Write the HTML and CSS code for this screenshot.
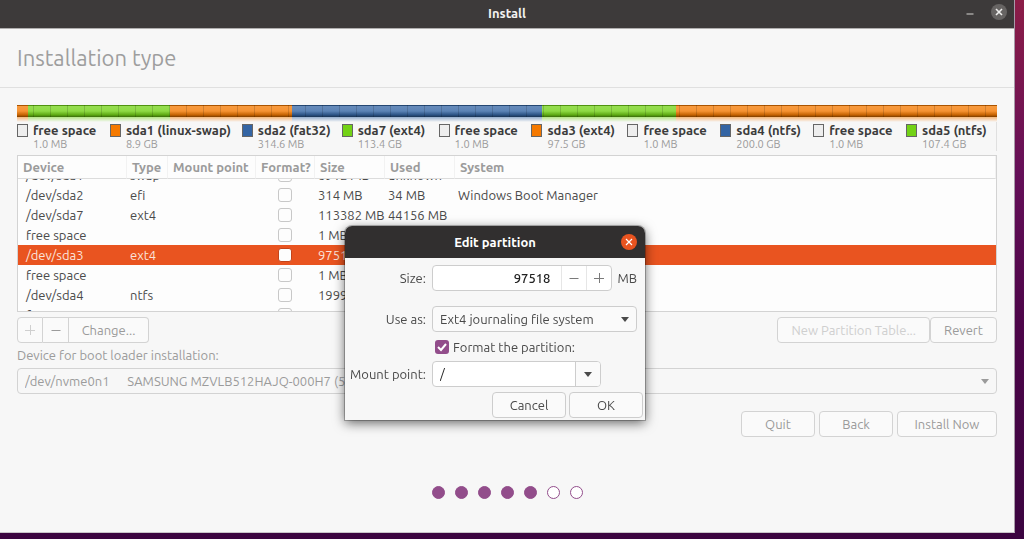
FILE: index.html
```
<!DOCTYPE html>
<html lang="en">
  <head>
    <meta charset="UTF-8" />
    <meta name="viewport" content="width=device-width, initial-scale=1.0" />
    <title>Install</title>
    <link rel="stylesheet" href="styles.css">
  </head>
  <body>
    <div class="window">
      <header class="titlebar">
        <span class="title">Install</span>
        <div class="window-controls">
          <button class="minimize" aria-label="Minimize">
            <svg width="16" height="16" viewBox="0 0 16 16"><path d="M4.500 10h7" stroke="#a5a3a1" stroke-width="1.500" /></svg>
          </button>
          <button class="close" aria-label="Close">
            <svg width="16" height="16" viewBox="0 0 16 16"><circle cx="8" cy="8" r="8" fill="#676463" /><path d="M5 5l6 6M11 5l-6 6" stroke="#f0efee" stroke-width="1.600" /></svg>
          </button>
        </div>
      </header>

      <h1 class="page-title">Installation type</h1>

      <main class="content">
        <div class="disk-bar" id="disk-bar"></div>
        <div class="reflection" id="reflection"></div>

        <ul class="legend">
          <li class="free"><b>free space</b><small>1.0 MB</small></li>
          <li class="orange"><b>sda1 (linux-swap)</b><small>8.9 GB</small></li>
          <li class="blue"><b>sda2 (fat32)</b><small>314.6 MB</small></li>
          <li class="green"><b>sda7 (ext4)</b><small>113.4 GB</small></li>
          <li class="free"><b>free space</b><small>1.0 MB</small></li>
          <li class="orange"><b>sda3 (ext4)</b><small>97.5 GB</small></li>
          <li class="free"><b>free space</b><small>1.0 MB</small></li>
          <li class="blue"><b>sda4 (ntfs)</b><small>200.0 GB</small></li>
          <li class="free"><b>free space</b><small>1.0 MB</small></li>
          <li class="green"><b>sda5 (ntfs)</b><small>107.4 GB</small></li>
        </ul>

        <div class="partitions" id="partitions">
          <table>
            <colgroup>
              <col class="col-device"><col class="col-type"><col class="col-mount"><col class="col-format"><col class="col-size"><col class="col-used"><col>
            </colgroup>
            <thead>
              <tr><th>Device</th><th>Type</th><th>Mount point</th><th>Format?</th><th>Size</th><th>Used</th><th>System</th></tr>
            </thead>
            <tbody>
              <tr><td>/dev/sda1</td><td>swap</td><td></td><td><input type="checkbox" aria-label="Format /dev/sda1"></td><td>8912 MB</td><td>unknown</td><td></td></tr>
              <tr><td>/dev/sda2</td><td>efi</td><td></td><td><input type="checkbox" aria-label="Format /dev/sda2"></td><td>314 MB</td><td>34 MB</td><td>Windows Boot Manager</td></tr>
              <tr><td>/dev/sda7</td><td>ext4</td><td></td><td><input type="checkbox" aria-label="Format /dev/sda7"></td><td>113382 MB</td><td>44156 MB</td><td></td></tr>
              <tr><td>free space</td><td></td><td></td><td><input type="checkbox" aria-label="Format free space"></td><td>1 MB</td><td></td><td></td></tr>
              <tr class="selected"><td>/dev/sda3</td><td>ext4</td><td></td><td><input type="checkbox" aria-label="Format /dev/sda3"></td><td>97518 MB</td><td></td><td></td></tr>
              <tr><td>free space</td><td></td><td></td><td><input type="checkbox" aria-label="Format free space"></td><td>1 MB</td><td></td><td></td></tr>
              <tr><td>/dev/sda4</td><td>ntfs</td><td></td><td><input type="checkbox" aria-label="Format /dev/sda4"></td><td>199999 MB</td><td></td><td></td></tr>
              <tr><td>free space</td><td></td><td></td><td><input type="checkbox" aria-label="Format free space"></td><td>1 MB</td><td></td><td></td></tr>
              <tr><td>/dev/sda5</td><td>ntfs</td><td></td><td><input type="checkbox" aria-label="Format /dev/sda5"></td><td>107374 MB</td><td></td><td></td></tr>
            </tbody>
          </table>
        </div>

        <div class="toolbar">
          <div class="linked">
            <button class="btn icon faint" aria-label="Add"><svg width="12" height="12" viewBox="0 0 12 12"><path d="M1 6.500h10M6.500 1v10" stroke="currentColor" /></svg></button>
            <button class="btn icon" aria-label="Remove"><svg width="12" height="12" viewBox="0 0 12 12"><path d="M1.500 6.500h9" stroke="currentColor" /></svg></button>
            <button class="btn change">Change...</button>
          </div>
          <div class="table-actions">
            <button class="btn faint">New Partition Table...</button>
            <button class="btn revert">Revert</button>
          </div>
        </div>

        <label class="boot-label" for="boot-device">Device for boot loader installation:</label>
        <div class="select">
          <select id="boot-device">
            <option>/dev/nvme0n1 &nbsp; &nbsp; &nbsp;SAMSUNG MZVLB512HAJQ-000H7 (512.1 GB)</option>
          </select>
          <svg class="arrow" width="8" height="5" viewBox="0 0 8 5"><path d="M0 0h8l-4 5z" fill="currentColor" /></svg>
        </div>

        <div class="nav-buttons">
          <button class="btn">Quit</button>
          <button class="btn">Back</button>
          <button class="btn install">Install Now</button>
        </div>

        <div class="steps">
          <i class="done"></i><i class="done"></i><i class="done"></i><i class="done"></i><i class="done"></i><i></i><i></i>
        </div>
      </main>
    </div>

    <div class="dialog" role="dialog" aria-labelledby="dialog-title">
      <header class="dialog-titlebar">
        <span id="dialog-title">Edit partition</span>
        <button class="close" aria-label="Close">
          <svg width="16" height="16" viewBox="0 0 16 16"><circle cx="8" cy="8" r="8" fill="#e95420" /><path d="M5 5l6 6M11 5l-6 6" stroke="#fff" stroke-width="1.200" /></svg>
        </button>
      </header>
      <form class="dialog-form">
        <label for="size">Size:</label>
        <div class="size-row">
          <div class="spin">
            <input type="text" id="size" value="97518">
            <button type="button" aria-label="Decrease"><svg width="12" height="12" viewBox="0 0 12 12"><path d="M1.500 6.500h9" stroke="currentColor" /></svg></button>
            <button type="button" aria-label="Increase"><svg width="12" height="12" viewBox="0 0 12 12"><path d="M1 6.500h10M6.500 1v10" stroke="currentColor" /></svg></button>
          </div>
          <span>MB</span>
        </div>

        <label class="use-as" for="use-as">Use as:</label>
        <div class="select use-as">
          <select id="use-as">
            <option>Ext4 journaling file system</option>
          </select>
          <svg class="arrow" width="8" height="5" viewBox="0 0 8 5"><path d="M0 0h8l-4 5z" fill="currentColor" /></svg>
        </div>

        <label class="format">
          <input type="checkbox" checked>
          <svg width="14" height="14" viewBox="0 0 14 14"><path d="M3 7l3 3 5-6" fill="none" stroke="#fff" stroke-width="2" /></svg>
          <span>Format the partition:</span>
        </label>

        <label for="mount">Mount point:</label>
        <div class="combo">
          <input type="text" id="mount" value="/">
          <button type="button" aria-label="Show mount points"><svg width="8" height="5" viewBox="0 0 8 5"><path d="M0 0h8l-4 5z" fill="currentColor" /></svg></button>
        </div>
      </form>
      <div class="dialog-buttons">
        <button class="btn">Cancel</button>
        <button class="btn">OK</button>
      </div>
    </div>

    <script>
      const segments = [
        ["orange", 11],
        ["green", 142],
        ["orange", 122],
        ["blue", 250],
        ["green", 134],
        ["orange", 321],
      ];

      ["disk-bar", "reflection"].forEach((id) => {
        const bar = document.getElementById(id);
        segments.forEach(([color, size]) => {
          const part = document.createElement("span");
          part.className = color;
          part.style.flexGrow = size;
          bar.appendChild(part);
        });
      });

      document.getElementById("partitions").scrollTop = 14;
    </script>
  </body>
</html>
```
FILE: styles.css
```
* {
  box-sizing: border-box;
}

body {
  margin: 0;
  min-height: 100vh;
  padding: 0 9px 6px 0;
  display: flex;
  background: linear-gradient(#8c1d47, #650f58 32%, #4d0549 60%, #3b0440);
  font-family: Ubuntu, "Noto Sans", sans-serif;
  font-size: 13px;
  line-height: 16px;
  color: #4a4a4a;
}

button,
input,
select {
  font: inherit;
  color: inherit;
  margin: 0;
}

button {
  padding: 0;
  border: none;
  background: none;
}

svg {
  display: block;
}

.window {
  flex: 1;
  min-width: 0;
  background: #f7f7f7;
  border-right: 1px solid #a79aa8;
  border-bottom: 1px solid #c9c5ca;
}

.titlebar {
  height: 29px;
  padding: 0 7px;
  display: grid;
  grid-template-columns: 1fr auto 1fr;
  align-items: center;
  background: #3d3a3a;
  border-bottom: 1px solid #b0aeae;
  color: #f2f1f0;
  font-weight: bold;
}

.title {
  grid-column: 2;
  padding-bottom: 2px;
}

.window-controls {
  display: flex;
  justify-content: flex-end;
  gap: 13px;
  padding-bottom: 4px;
}

.page-title {
  margin: 0;
  height: 59px;
  padding: 0 17px;
  display: flex;
  align-items: center;
  border-bottom: 1px solid #e0e0e0;
  color: #9e9e9e;
  font-size: 22px;
  font-weight: normal;
}

.content {
  padding: 17px 17px 0;
  display: flex;
  flex-direction: column;
  color: #9b9b9b;
}

/* disk usage bar */
.disk-bar,
.reflection {
  display: flex;
}

.disk-bar span,
.reflection span {
  flex-basis: 0;
}

.disk-bar {
  height: 12px;
  position: relative;
}

.disk-bar::after {
  content: "";
  position: absolute;
  inset: 0;
  background:
    repeating-linear-gradient(90deg, transparent 0 16px, rgba(0, 0, 0, 0.15) 16px 17px),
    linear-gradient(rgba(0, 0, 0, 0.3) 0 1px, rgba(255, 255, 255, 0.25) 1px, rgba(255, 255, 255, 0.2) 6px, rgba(0, 0, 0, 0.2) 10px, rgba(0, 0, 0, 0.5));
}

.reflection {
  height: 5px;
  opacity: 0.5;
  mask-image: linear-gradient(#000, transparent);
}

.orange {
  --color: #f57900;
}

.green {
  --color: #73d216;
}

.blue {
  --color: #3465a4;
}

.free {
  --color: #eeeeee;
}

.disk-bar span,
.reflection span {
  background: var(--color);
}

.legend {
  list-style: none;
  margin: 0 0 4px;
  padding: 0;
  display: grid;
  grid-template-columns: 93fr 132fr 100fr 97fr 93fr 96fr 93fr 93fr 93fr 90fr;
  border-right: 1px solid #e0e0e0;
}

.legend li {
  display: grid;
  grid-template-columns: 11px 1fr;
  column-gap: 5px;
  align-items: center;
  white-space: nowrap;
}

.legend li::before {
  content: "";
  height: 11px;
  background: var(--color);
  border: 1px solid #666;
}

.legend b {
  color: #3c3c3c;
}

.legend small {
  grid-column: 2;
  font-size: 11px;
  line-height: 13px;
}

/* partition list */
.partitions {
  height: 157px;
  overflow: hidden;
  background: #fdfdfd;
  border: 1px solid #d3d3d3;
  color: #4a4a4a;
}

table {
  width: 100%;
  table-layout: fixed;
  border-collapse: separate;
  border-spacing: 0;
}

.col-device {
  width: 109px;
}

.col-type {
  width: 41px;
}

.col-mount {
  width: 88px;
}

.col-format {
  width: 59px;
}

.col-size,
.col-used {
  width: 70px;
}

th {
  position: sticky;
  top: 0;
  z-index: 1;
  height: 23px;
  padding: 0 0 0 5px;
  background: #fdfdfd;
  border-right: 1px solid #f2f2f2;
  border-bottom: 1px solid #dcdcdc;
  color: #9b9b9b;
  text-align: left;
  white-space: nowrap;
}

td {
  height: 20px;
  padding: 0 0 0 3px;
  white-space: nowrap;
}

td:first-child {
  padding-left: 8px;
}

td input {
  appearance: none;
  display: block;
  width: 14px;
  height: 14px;
  margin-left: 19px;
  background: #fdfdfd;
  border: 1px solid #c8c8c8;
  border-radius: 3px;
}

.selected td {
  background: #e95420;
  color: #fbe3da;
}

.selected input {
  border-color: #c4441a;
}

/* buttons */
.btn {
  height: 26px;
  min-width: 74px;
  padding: 0 13px;
  background: #fafafa;
  border: 1px solid #d3d3d3;
  border-radius: 4px;
}

.btn.faint {
  color: #cfcfcf;
}

.toolbar {
  margin-top: 5px;
  display: flex;
  justify-content: space-between;
}

.linked,
.table-actions {
  display: flex;
}

.linked .btn {
  border-radius: 0;
}

.linked .btn + .btn {
  border-left: none;
}

.linked .btn:first-child {
  border-radius: 4px 0 0 4px;
}

.linked .btn:last-child {
  border-radius: 0 4px 4px 0;
}

.linked .icon {
  min-width: 26px;
  padding: 0;
  display: flex;
  align-items: center;
  justify-content: center;
}

.linked .change {
  min-width: 80px;
  padding: 0 12px;
}

.table-actions .revert {
  min-width: 67px;
}

.boot-label {
  margin: 4px 0 5px;
}

.select {
  display: grid;
  grid-template-columns: minmax(0, 1fr);
  align-items: center;
}

.select > * {
  grid-area: 1 / 1;
}

.select select {
  appearance: none;
  width: 100%;
  height: 26px;
  padding: 0 24px 0 7px;
  background: #f7f7f7;
  border: 1px solid #d3d3d3;
  border-radius: 4px;
}

.select .arrow {
  justify-self: end;
  margin-right: 8px;
  pointer-events: none;
}

.nav-buttons {
  margin-top: 17px;
  display: flex;
  justify-content: flex-end;
  gap: 4px;
}

.nav-buttons .install {
  min-width: 100px;
}

.steps {
  margin-top: 49px;
  display: flex;
  justify-content: center;
  gap: 10px;
}

.steps i {
  width: 13px;
  height: 13px;
  background: #fff;
  border: 1px solid #924d8b;
  border-radius: 50%;
}

.steps .done {
  background: #924d8b;
}

/* edit partition dialog */
.dialog {
  position: absolute;
  top: 226px;
  left: 345px;
  width: 300px;
  background: #f7f7f7;
  border-radius: 7px 7px 0 0;
  box-shadow: 0 0 0 1px rgba(0, 0, 0, 0.25), 0 3px 12px rgba(0, 0, 0, 0.6);
  z-index: 2;
}

.dialog-titlebar {
  height: 32px;
  padding: 0 8px;
  display: grid;
  grid-template-columns: 1fr auto 1fr;
  align-items: center;
  background: #312f2f;
  border-radius: 7px 7px 0 0;
  color: #fff;
  font-weight: bold;
}

#dialog-title {
  grid-column: 2;
}

.dialog-titlebar .close {
  justify-self: end;
}

.dialog-form {
  padding: 7px 8px 0 0;
  display: grid;
  grid-template-columns: 81px minmax(0, 1fr);
  column-gap: 6px;
  align-items: center;
}

.dialog-form > label {
  text-align: right;
  white-space: nowrap;
}

.dialog-form .use-as {
  margin-top: 15px;
}

.size-row {
  display: flex;
  align-items: center;
  gap: 5px;
}

.spin,
.combo {
  height: 26px;
  display: flex;
  background: #fff;
  border: 1px solid #cdcdcd;
  border-radius: 4px;
  overflow: hidden;
}

.spin {
  flex: 1;
}

.combo {
  width: 169px;
}

.spin input,
.combo input {
  flex: 1;
  min-width: 0;
  padding: 0 7px;
  border: none;
  background: none;
  color: #222;
}

.spin input {
  padding-right: 11px;
  text-align: right;
  font-weight: 500;
}

.spin button,
.combo button {
  width: 25px;
  display: flex;
  align-items: center;
  justify-content: center;
  border-left: 1px solid #e6e6e6;
}

.spin button {
  color: #7a7a7a;
}

.combo button {
  background: #fafafa;
  border-color: #cdcdcd;
}

.dialog .select select {
  background: #fafafa;
  border-color: #cdcdcd;
}

.dialog-form .format {
  grid-column: 2;
  height: 29px;
  padding-left: 3px;
  display: grid;
  grid-template-columns: 14px 1fr;
  column-gap: 4px;
  align-items: center;
  text-align: left;
}

.format input,
.format svg {
  grid-area: 1 / 1;
}

.format input {
  appearance: none;
  width: 14px;
  height: 14px;
  border-radius: 3px;
  background: #924d8b;
}

.format svg {
  z-index: 1;
}

.dialog-buttons {
  padding: 5px 2px 2px;
  display: flex;
  justify-content: flex-end;
  gap: 3px;
}

.dialog-buttons .btn {
  border-color: #cdcdcd;
}
```
